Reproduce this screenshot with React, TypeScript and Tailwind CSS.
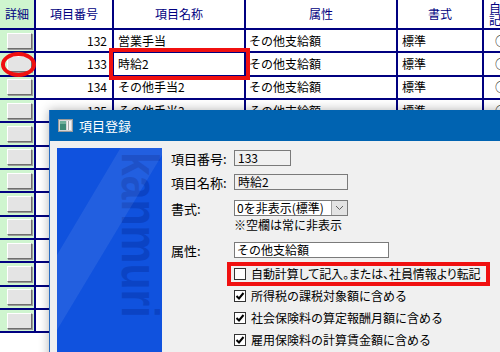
import React from 'react';

interface Row {
    no: number;
    name: string;
    attr: string;
    format: string;
}

const rows: Row[] = [
    { no: 132, name: '営業手当', attr: 'その他支給額', format: '標準' },
    { no: 133, name: '時給2', attr: 'その他支給額', format: '標準' },
    { no: 134, name: 'その他手当2', attr: 'その他支給額', format: '標準' },
    { no: 135, name: 'その他手当3', attr: 'その他支給額', format: '標準' },
    { no: 136, name: 'その他手当4', attr: 'その他支給額', format: '標準' },
    { no: 137, name: 'その他手当5', attr: 'その他支給額', format: '標準' },
    { no: 138, name: 'その他手当6', attr: 'その他支給額', format: '標準' },
    { no: 139, name: 'その他手当7', attr: 'その他支給額', format: '標準' },
    { no: 140, name: 'その他手当8', attr: 'その他支給額', format: '標準' },
    { no: 141, name: 'その他手当9', attr: 'その他支給額', format: '標準' },
    { no: 142, name: 'その他手当10', attr: 'その他支給額', format: '標準' },
    { no: 143, name: 'その他手当11', attr: 'その他支給額', format: '標準' },
    { no: 144, name: 'その他手当12', attr: 'その他支給額', format: '標準' },
];

const checks = [
    { label: '自動計算して記入。または、社員情報より転記', checked: false },
    { label: '所得税の課税対象額に含める', checked: true },
    { label: '社会保険料の算定報酬月額に含める', checked: true },
    { label: '雇用保険料の計算賃金額に含める', checked: true },
];

const gridCols = 'grid grid-cols-[36px_78px_132px_152px_86px_36px]';
const cell = 'border-r-2 border-b-2 border-[#000080] flex items-center';

const CheckBox: React.FC<{ checked: boolean }> = ({ checked }) => (
    <span className="flex h-[12px] w-[12px] shrink-0 items-center justify-center border border-[#333] bg-white">
        {checked && (
            <svg width="10" height="10" viewBox="0 0 10 10">
                <path d="M1.5 5 L4 7.5 L8.5 2" fill="none" stroke="#000" strokeWidth="2" />
            </svg>
        )}
    </span>
);

const WindowIcon = () => (
    <svg width="15" height="13" viewBox="0 0 15 13">
        <rect x="0.5" y="0.5" width="14" height="12" fill="#d6d6d6" stroke="#9a9a9a" />
        <rect x="2" y="2" width="6" height="9" fill="#3d8a76" />
        <rect x="2" y="2" width="6" height="3" fill="#6fb09a" />
        <rect x="9" y="2" width="4" height="9" fill="#f4f4f4" />
        <rect x="10" y="2" width="1" height="9" fill="#a8a8a8" />
    </svg>
);

export default function App() {
    return (
        <div className="relative h-[352px] w-[500px] overflow-hidden bg-white font-['Noto_Sans_CJK_JP',sans-serif] text-[12px] leading-none text-black">
            {/* Grid behind */}
            <div className="w-[520px]">
                <div className={`${gridCols} h-[30px] text-[#000080]`}>
                    <div className={`${cell} justify-center bg-[#cff5cf]`}>詳細</div>
                    <div className={`${cell} justify-center`}>項目番号</div>
                    <div className={`${cell} justify-center`}>項目名称</div>
                    <div className={`${cell} justify-center`}>属性</div>
                    <div className={`${cell} justify-center`}>書式</div>
                    <div className={`${cell} justify-center text-center leading-[12px]`}>
                        自動
                        <br />
                        記入
                    </div>
                </div>
                {rows.map((r) => (
                    <div key={r.no} className={`${gridCols} h-[23.33px]`}>
                        <div className={`${cell} bg-[#cff5cf] pl-[7px]`}>
                            <span className="block h-[16px] w-[25px] border border-t-white border-l-white border-b-[#6e6e6e] border-r-[#6e6e6e] bg-[#e4e4e4] shadow-[1px_1px_0_#9a9a9a]" />
                        </div>
                        <div className={`${cell} justify-end pr-[5px]`}>{r.no}</div>
                        <div className={`${cell} pl-[4px]`}>{r.name}</div>
                        <div className={`${cell} pl-[3px]`}>{r.attr}</div>
                        <div className={`${cell} pl-[4px]`}>{r.format}</div>
                        <div className={`${cell} justify-center`}>○</div>
                    </div>
                ))}
            </div>

            {/* Dialog */}
            <div className="absolute left-[49px] top-[110px] h-[260px] w-[470px] border-l border-[#2a6cc0] bg-[#f0f0f0] shadow-[0_0_10px_rgba(0,0,0,0.3)]">
                <div className="flex h-[31px] items-center bg-[#0063b1] pl-[8px]">
                    <WindowIcon />
                    <span className="ml-[6px] text-[13px] text-white">項目登録</span>
                </div>
                <div className="flex pl-[7px] pt-[7px]">
                    <div className="relative h-[230px] w-[105px] overflow-hidden bg-[#1052de]">
                        <div className="absolute left-[57px] top-[4px] origin-top scale-y-[0.82] font-['Liberation_Sans',sans-serif] text-[52px] font-bold leading-none text-[#0b43c4] [writing-mode:vertical-rl]">
                            kanmuri
                        </div>
                        <svg className="absolute inset-0" width="105" height="230" viewBox="0 0 105 230">
                            <polygon points="63.5,0 105,0 105,7 0,182 0,107" fill="#ffffff" fillOpacity="0.08" />
                        </svg>
                    </div>

                    <div className="ml-[9px] flex flex-col">
                        <div className="mt-[2px] flex h-[16px] items-center">
                            <span className="w-[63px] text-[13px]">項目番号:</span>
                            <span className="flex h-[16px] w-[57px] items-center border border-[#7a7a7a] bg-[#f0f0f0] px-[3px]">133</span>
                        </div>
                        <div className="mt-[8px] flex h-[16px] items-center">
                            <span className="w-[63px] text-[13px]">項目名称:</span>
                            <span className="flex h-[16px] w-[114px] items-center border border-[#7a7a7a] bg-[#f0f0f0] px-[3px]">時給2</span>
                        </div>
                        <div className="mt-[10px] flex h-[16px] items-center">
                            <span className="w-[63px] text-[13px]">書式:</span>
                            <span className="flex h-[16px] w-[114px] items-center border border-[#7a7a7a] bg-white">
                                <span className="flex-1 pl-[2px]">0を非表示(標準)</span>
                                <span className="flex h-full w-[16px] items-center justify-center border-l border-[#a0a0a0] bg-[#e3e3e3]">
                                    <svg width="9" height="6" viewBox="0 0 9 6">
                                        <path d="M1 1 L4.5 4.5 L8 1" fill="none" stroke="#606060" strokeWidth="1" />
                                    </svg>
                                </span>
                            </span>
                        </div>
                        <div className="mt-[2px] flex h-[14px] items-center pl-[63px]">※空欄は常に非表示</div>
                        <div className="mt-[10px] flex h-[16px] items-center">
                            <span className="w-[63px] text-[13px]">属性:</span>
                            <span className="flex h-[16px] w-[155px] items-center border border-[#7a7a7a] bg-white px-[2px]">その他支給額</span>
                        </div>
                        <div className="mt-[5px] flex flex-col pl-[63px]">
                            {checks.map((c, i) => (
                                <div key={i} className="flex h-[22px] items-center gap-[5px]">
                                    <CheckBox checked={c.checked} />
                                    <span className={i === 0 ? "tracking-[-0.1px] [font-feature-settings:'palt']" : ''}>{c.label}</span>
                                </div>
                            ))}
                        </div>
                    </div>
                </div>
            </div>

            {/* Red annotations */}
            <div className="absolute left-[1px] top-[52px] h-[25px] w-[35px] rounded-[50%] border-4 border-[#f01010]" />
            <div className="absolute left-[109px] top-[48px] h-[32px] w-[141px] border-4 border-[#f01010]" />
            <div className="absolute left-[227px] top-[262px] h-[24px] w-[263px] border-4 border-[#f01010]" />
        </div>
    );
}
